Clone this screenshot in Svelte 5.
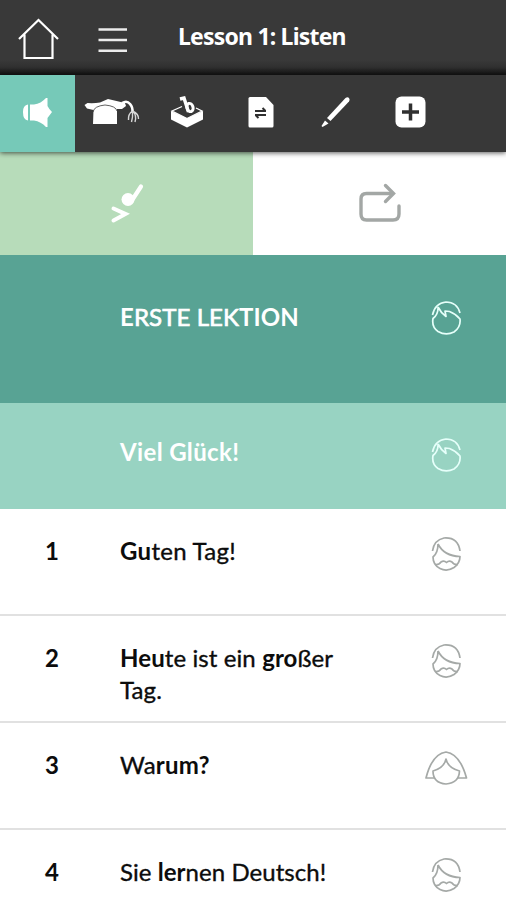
<script lang="ts">
  type Part = { text: string; bold?: boolean };
  type Face = 'hero' | 'man' | 'woman';
  type Line = { id: string; kind: 'title' | 'subtitle' | 'sentence'; face: Face; spacing: number; parts: Part[] };

  const lines: Line[] = [
    {
      id: '', kind: 'title', face: 'hero', spacing: 0.1,
      parts: [{ text: 'E', bold: true }, { text: 'RSTE LEK' }, { text: 'TION', bold: true }],
    },
    {
      id: '', kind: 'subtitle', face: 'hero', spacing: 0.35,
      parts: [{ text: 'Viel Glück!', bold: true }],
    },
    {
      id: '1', kind: 'sentence', face: 'man', spacing: 0.3,
      parts: [{ text: 'Gu', bold: true }, { text: 'ten Tag!' }],
    },
    {
      id: '2', kind: 'sentence', face: 'man', spacing: 0.1,
      parts: [{ text: 'Heu', bold: true }, { text: 'te ist ein ' }, { text: 'gro', bold: true }, { text: 'ßer ' }, { text: 'Tag.' }],
    },
    {
      id: '3', kind: 'sentence', face: 'woman', spacing: 0.2,
      parts: [{ text: 'Wa' }, { text: 'rum?', bold: true }],
    },
    {
      id: '4', kind: 'sentence', face: 'man', spacing: 0.05,
      parts: [{ text: 'Sie ' }, { text: 'ler', bold: true }, { text: 'nen Deutsch!' }],
    },
  ];

  const tools = ['listen', 'learn', 'practice', 'translate', 'write', 'more'];

  let activeTool = $state('listen');
  let activeTab = $state('play');
</script>

<svelte:head>
  <title>Lesson 1: Listen</title>
</svelte:head>

<main>
  <!-- Header -->
  <header>
    <button class="home" aria-label="Home">
      <svg width="44" height="44" viewBox="0 0 44 44" fill="none" stroke="#fff" stroke-width="2.2">
        <path d="M3 23 L22.500 4 L42 23 M8.500 18.500 V42 H36.500 V18.500" />
      </svg>
    </button>
    <button class="menu" aria-label="Menu">
      <svg width="30" height="28" viewBox="0 0 30 28" stroke="#ececec" stroke-width="2.6">
        <path d="M0.500 3.500 H29 M0.500 14 H29 M0.500 24.700 H29" />
      </svg>
    </button>
    <h1>Lesson 1: Listen</h1>
  </header>

  <!-- Exercise toolbar -->
  <nav>
    {#each tools as tool}
      <button class="tool" class:active={activeTool === tool} aria-label={tool} onclick={() => (activeTool = tool)}>
        {#if tool === 'listen'}
          <svg width="56" height="36" viewBox="0 0 56 36" fill="#fff">
            <path d="M19 10.500 Q14 11 14 18 Q14 26 19 26.500 Z" />
            <path d="M21 10.500 H25 Q32 9.500 37 4 H38.500 V12 Q40 15 43 18 Q40 22 38.500 24 V33 H37 Q32 27.500 25 26.500 H21 Z" />
          </svg>
        {:else if tool === 'learn'}
          <svg width="56" height="36" viewBox="0 0 56 36" fill="#fff">
            <path d="M0.500 11 L3.500 9 Q10 9.500 16 8.500 L24 5 L41 9 L42 12 L38 15 L33 15 V30 H9 L9.500 16 L3 14.500 Z" />
            <path d="M9 18 Q10 12 21 11 Q32 12 33 17" fill="none" stroke="#383838" stroke-width="0.8" />
            <path d="M38 9 Q43 6 46 10 Q49 13 48.500 19" fill="none" stroke="#fff" stroke-width="2.500" />
            <path d="M48.500 17 Q44 20 44.500 26 M48.500 17 Q49 23 47.500 28 M48.500 17 Q53 21 51 28 M48.500 17 Q55 20 54.500 25" fill="none" stroke="#d8d8d8" stroke-width="1.400" />
          </svg>
        {:else if tool === 'practice'}
          <svg width="56" height="36" viewBox="0 0 56 36" fill="#fff">
            <path d="M12 17 L28 24.500 L44 17 V25.500 L28 33.500 L12 25.500 Z" />
            <path d="M23 12.500 L13 17 L28 24.500 L43 17 L37 14" fill="none" stroke="#fff" stroke-width="1.300" />
            <path d="M21 5 L25 4 L29.500 18" fill="none" stroke="#fff" stroke-width="3.400" />
            <ellipse cx="31" cy="13.500" rx="3" ry="4.200" fill="none" stroke="#fff" stroke-width="3" transform="rotate(-18 31 13.500)" />
          </svg>
        {:else if tool === 'translate'}
          <svg width="56" height="36" viewBox="0 0 56 36" fill="#fff">
            <path d="M17 3 H33 L40.500 11 V32 Q40.500 33.500 39 33.500 H17 Q15.500 33.500 15.500 32 V4.500 Q15.500 3 17 3 Z" />
            <path d="M22 17 H33 M29.500 14 L32.500 17 M33 21 H22 M25.500 24 L22.500 21" fill="none" stroke="#303030" stroke-width="2" />
          </svg>
        {:else if tool === 'write'}
          <svg width="56" height="36" viewBox="0 0 56 36" fill="#fff">
            <path d="M19 24 L37.500 4 Q39.500 2.300 41 4 Q42.300 5.500 41 7.500 L22.500 27 Z" />
            <path d="M17 26.500 L20.500 29.500 L14.500 33 L13.500 32 Z" />
          </svg>
        {:else}
          <svg width="56" height="36" viewBox="0 0 56 36" fill="#fff">
            <rect x="12.500" y="2.500" width="30" height="31" rx="6" />
            <path d="M27.500 9.500 V26.500 M19 18 H36" stroke="#303030" stroke-width="3.500" />
          </svg>
        {/if}
      </button>
    {/each}
  </nav>

  <!-- Playback tabs -->
  <div class="tabs">
    <button class="tab" class:selected={activeTab === 'play'} aria-label="Play" onclick={() => (activeTab = 'play')}>
      <svg width="44" height="50" viewBox="0 0 44 50" fill="none" stroke="#fff">
        <circle cx="23" cy="20.500" r="6.500" fill="#fff" stroke="none" />
        <path d="M26.500 22 L36 7.500" stroke-width="4.200" stroke-linecap="round" />
        <path d="M8.500 29.500 L20.500 35 L8.500 41.500" stroke-width="4" stroke-linecap="round" />
      </svg>
    </button>
    <button class="tab" class:selected={activeTab === 'repeat'} aria-label="Repeat" onclick={() => (activeTab = 'repeat')}>
      <svg width="46" height="42" viewBox="0 0 46 42" fill="none" stroke="#a3a7a5" stroke-width="3.400" stroke-linecap="round">
        <path d="M35 10.500 H9.500 Q4 10.500 4 16 V31 Q4 37 9.500 37 H36 Q42 37 42 31 V23" />
        <path d="M28.500 2.500 L36.500 10.500 L28.500 18.500" />
      </svg>
    </button>
  </div>

  <!-- Dialogue -->
  {#each lines as line}
    <section class={line.kind}>
      <span class="number">{line.id}</span>
      <p style="letter-spacing: {line.spacing}px">{#each line.parts as part}{#if part.bold}<b>{part.text}</b>{:else}<span>{part.text}</span>{/if}{/each}</p>
      <span class="face">
        {#if line.face === 'hero'}
          <svg width="44" height="36" viewBox="0 0 44 36">
            <path d="M8.500 15 Q11 3 22 2 Q33 2 36 13" />
            <path d="M14 7 Q14.500 14 9 18.500 Q7.500 27 14 31.500 Q22 36 30 32 Q37 27 36 19 Q32 14 25.500 11.500 L21 11 L22 16.500 Q17 13 14 7" />
          </svg>
        {:else if line.face === 'man'}
          <svg width="44" height="36" viewBox="0 0 44 36">
            <path d="M8.500 15 Q10 4 20 2 Q34 1 36 15" />
            <path d="M14 8 Q14 17 9 21 Q9 29 16 32.500 Q23 36 30 31.500 Q36 27 36 20.500 Q20 20 14 8" />
            <path d="M11 28.500 Q15 29 17 26 Q20 24 22.500 26.500 Q25 24 28 26 Q30 29 34 28.500" />
          </svg>
        {:else}
          <svg width="44" height="36" viewBox="0 0 44 36">
            <path d="M10 28 H2 Q8 4 22 2 Q36 4 42.500 28 H34" />
            <path d="M22 9 Q20 18 9 21 Q9 33 22 34 Q35 33 35.500 21 Q24 18 22 9 Z" />
          </svg>
        {/if}
      </span>
    </section>
  {/each}
</main>

<style>
  :global(body) {
    margin: 0;
    background: #fff;
  }

  main {
    height: 900px;
    overflow: hidden;
    font-family: Lato, 'Noto Sans', sans-serif;
    color: #0c0c0c;
  }

  button {
    padding: 0;
    border: none;
    background: transparent;
    cursor: pointer;
  }

  svg {
    display: block;
  }

  header {
    display: flex;
    align-items: center;
    box-sizing: border-box;
    height: 75px;
    padding-left: 16px;
    background: linear-gradient(#393939 60px, #303030 67px, #151515 74px);
  }

  .home {
    padding-top: 1px;
  }

  .menu {
    margin-left: 38px;
    padding-top: 4px;
  }

  h1 {
    margin: 0 0 3px 50px;
    font: bold 23px/34px 'Noto Sans', sans-serif;
    letter-spacing: -0.8px;
    white-space: nowrap;
    color: #fff;
  }

  nav {
    position: relative;
    display: flex;
    height: 77px;
    background: #383838;
    box-shadow: 0 1px 5px rgba(0, 0, 0, 0.65);
  }

  .tool {
    display: flex;
    align-items: center;
    justify-content: center;
    width: 74.700px;
    height: 77px;
    padding-bottom: 3px;
    box-sizing: border-box;
  }

  .tool.active {
    background: #76c9b8;
  }

  .tabs {
    display: flex;
    height: 103px;
  }

  .tab {
    display: flex;
    align-items: center;
    justify-content: center;
    width: 50%;
    background: #fff;
  }

  .tab.selected {
    background: #b7dcba;
  }

  section {
    display: flex;
    align-items: flex-start;
    box-sizing: border-box;
    height: 107px;
    padding-top: 26px;
    border-bottom: 2px solid #e1e1e1;
    font-size: 24px;
    line-height: 32px;
  }

  .title {
    height: 148px;
    padding-top: 46px;
    border: none;
    background: #58a394;
    color: #fff;
  }

  .subtitle {
    height: 106px;
    padding-top: 33px;
    border: none;
    background: #98d3c2;
    color: #fff;
  }

  .number {
    width: 75px;
    padding-left: 45px;
    font-weight: bold;
  }

  p {
    width: 240px;
    margin: 0;
  }

  p span {
    -webkit-text-stroke: 0.35px currentColor;
  }

  .title p span {
    -webkit-text-stroke-width: 0.7px;
  }

  .face {
    margin: 1px 0 0 64px;
  }

  .title .face {
    margin-top: -1px;
  }

  .face svg {
    fill: none;
    stroke: #a5a9a7;
    stroke-width: 1.700;
    stroke-linejoin: round;
  }

  .title .face svg,
  .subtitle .face svg {
    stroke: #e6fffa;
  }
</style>
